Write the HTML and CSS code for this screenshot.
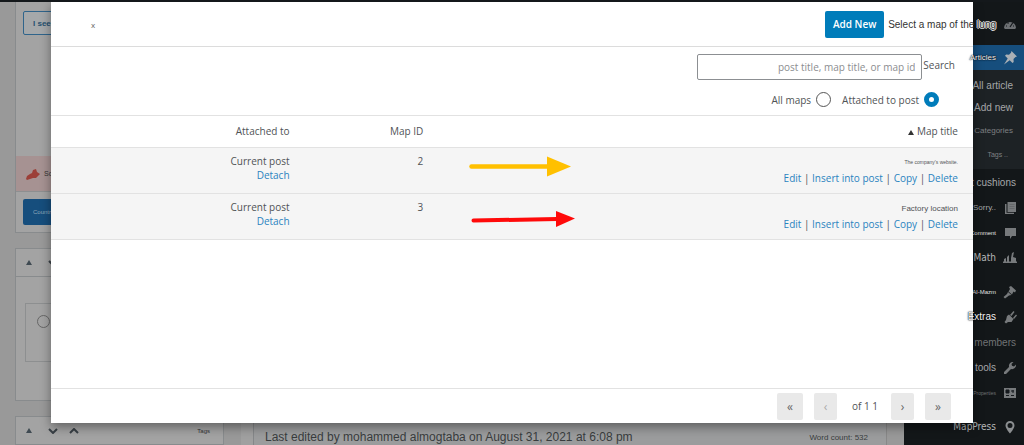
FILE: index.html
```html
<!DOCTYPE html>
<html lang="en">
<head>
<meta charset="utf-8">
<title>Select a map</title>
<link rel="stylesheet" href="styles.css">
</head>
<body>
<div class="page">
  <div class="workspace">
    <aside class="side">
      <section class="panel publish">
        <div class="publish-top"><button class="btn-outline" type="button">I see ...</button></div>
        <div class="notice">
          <svg width="16" height="12" viewBox="0 0 16 12"><path d="M1 11 2 8l3-2 2-1 1-3 3-1 1 3 3 2-2 2-2 2H8l-3 1-3 1z" fill="#9c3f38"/></svg>
          <span>So..</span>
        </div>
        <div class="publish-bottom"><button class="btn-solid" type="button">Country</button></div>
      </section>
      <section class="panel options">
        <div class="panel-head">
          <svg width="6" height="5" viewBox="0 0 6 5"><path d="M0 5 3 0l3 5z" fill="#3f4a52"/></svg>
          <svg width="10" height="6" viewBox="0 0 10 6"><path d="m1 1 4 4 4-4" class="chev"/></svg>
        </div>
        <div class="option-box"><span class="option-dot"></span></div>
      </section>
      <section class="panel tags">
        <div class="panel-head">
          <svg width="6" height="5" viewBox="0 0 6 5"><path d="M0 5 3 0l3 5z" fill="#3f4a52"/></svg>
          <svg width="10" height="6" viewBox="0 0 10 6"><path d="m1 1 4 4 4-4" class="chev"/></svg>
          <svg width="10" height="6" viewBox="0 0 10 6"><path d="m1 5 4-4 4 4" class="chev"/></svg>
          <span class="panel-title">Tags</span>
        </div>
      </section>
    </aside>
    <main class="editor">
      <div class="status">
        <span>Last edited by mohammed almogtaba on August 31, 2021 at 6:08 pm</span>
        <span class="words">Word count: 532</span>
      </div>
    </main>
  </div>

  <nav class="menu" aria-label="Admin">
    <div class="item first"><svg class="ico" viewBox="0 0 14 14"><path d="M1 11a6 6 0 1 1 12 0l-1 1H2z" fill="#6d7073"/><path d="M3 9h1M4.500 5.500l1 1M7 4v1M11 9h-1M7 10l3-4.500" stroke="#15191c" stroke-width="1.200" fill="none"/></svg></div>
    <a class="item current" href="#"><span class="over">Articles</span><svg class="ico" viewBox="0 0 14 14"><path d="m8.500 0 5.500 5.500-1.500.5-2 2 .2 3-1.200 1-2.800-2.800L1 13.500 4.700 7.500 2 4.800l1.200-1.300 2.800.3 2-2z" fill="#a9b0b6"/></svg></a>
    <div class="submenu">
      <a href="#">All article</a>
      <a href="#">Add new</a>
      <a class="s8" href="#">Categories</a>
      <a class="s7" href="#">Tags&nbsp;..</a>
    </div>
    <a class="item plain" href="#"><span>t cushions</span></a>
    <a class="item s8" href="#"><span>Sorry..</span><svg class="ico" viewBox="0 0 14 14"><path d="M4.500 1H13v10H4.500z" fill="#777a7c"/><path d="M3.500 3H2v10h9v-1.200H3.500z" fill="#777a7c"/><path d="M6.500 3.500h5M6.500 5.500h5M6.500 7.500h5" stroke="#66696b"/></svg></a>
    <a class="item s6 bright" href="#"><span>Comment</span><svg class="ico" viewBox="0 0 14 14"><path d="M2 2h11v8H9l-2 3v-3H2z" fill="#777a7c"/></svg></a>
    <a class="item s10" href="#"><span>Math</span><svg class="ico" viewBox="0 0 14 14"><path d="M1 11V8l2-1v4zm3 0V6l2-2v7zm4 0V7l1-5 2-1-1 5 3 1v4zM0 10.500h14V12H0z" fill="#777a7c"/></svg></a>
    <a class="item s6 bright gap" href="#"><span>Al-Mazm</span><svg class="ico" viewBox="0 0 14 14"><path d="m6 2 2-1 5 4.500-1 2-1.500-1L9 9.500 5.500 6.500 7 4zM5 7l3.500 3-2.500.5L2 13.500.5 12 4 9z" fill="#777a7c"/></svg></a>
    <a class="item" href="#"><span class="over">Extras</span><svg class="ico" viewBox="0 0 14 14"><path d="m4 6 2-1.500L10.500 9l-2 3H5l-2 1.500L1.500 12 3 10zM7 5l3.500-4 1 1L8.500 6zM10 8l3-3.500 1 1L11 9z" fill="#777a7c"/></svg></a>
    <a class="item plain dim" href="#"><span>n members</span></a>
    <a class="item" href="#"><span>tools</span><svg class="ico" viewBox="0 0 14 14"><path d="M13 3.500 11 5.500 9 4.800 8.500 3l2-2A4 4 0 0 0 6 6L1 11v2h2l5-5a4 4 0 0 0 5-4.500z" fill="#777a7c"/></svg></a>
    <a class="item s5 dim" href="#"><span>Properties</span><svg class="ico" viewBox="0 0 14 14"><path d="M1 2h12v10H1z" fill="#777a7c"/><path d="M3 4h3v3H3zM8 5h3M10 4v3M3 9.500h3M8 9.500h3" fill="#15191c" stroke="#15191c"/></svg></a>
    <a class="item s10 gap" href="#"><span>MapPress</span><svg class="ico" viewBox="0 0 14 14"><path fill-rule="evenodd" d="M7 1a4.500 4.500 0 0 1 4.500 4.500C11.500 8.500 7 13.500 7 13.500S2.500 8.500 2.500 5.500A4.500 4.500 0 0 1 7 1zm0 2a2.500 2.500 0 1 0 0 5 2.500 2.500 0 0 0 0-5z" fill="#8b8e90"/></svg></a>
  </nav>

  <div class="modal" role="dialog" aria-labelledby="dialog-title">
    <header class="modal-head">
      <button class="close" type="button" aria-label="Close">x</button>
      <button class="add" type="button">Add New</button>
      <h1 id="dialog-title" class="title">Select a map of the <span class="halo">lung</span></h1>
    </header>
    <form class="filters">
      <div class="search">
        <input id="q" type="text" placeholder="post title, map title, or map id">
        <label for="q">Search</label>
      </div>
      <div class="radios">
        <label for="all">All maps</label><input id="all" type="radio" name="scope">
        <label class="second" for="attached">Attached to post</label><input id="attached" type="radio" name="scope" checked>
      </div>
    </form>
    <div class="list">
      <table>
        <thead>
          <tr><th class="c-att">Attached to</th><th class="c-id">Map ID</th><th><svg width="6" height="5" viewBox="0 0 6 5"><path d="M0 5 3 0l3 5z" fill="#333"/></svg> Map title</th></tr>
        </thead>
        <tbody>
          <tr>
            <td>Current post<br><a href="#">Detach</a></td>
            <td>2</td>
            <td class="c-title">
              <svg class="arrow" width="104" height="22" viewBox="0 0 104 22"><path d="M2.500 11.500H80" stroke="#ffc000" stroke-width="4.500" stroke-linecap="round"/><path d="M78 1.500v20l24-10z" fill="#ffc000"/></svg>
              <div class="name tiny">The company's website.</div>
              <div class="actions"><a href="#">Edit</a> | <a href="#">Insert into post</a> | <a href="#">Copy</a> | <a href="#">Delete</a></div>
            </td>
          </tr>
          <tr>
            <td>Current post<br><a href="#">Detach</a></td>
            <td>3</td>
            <td class="c-title">
              <svg class="arrow" width="108" height="28" viewBox="0 0 108 28"><path d="M4.500 19.500 88 18" stroke="#ff0a0a" stroke-width="4" stroke-linecap="round"/><path d="M87 10v16l19-8.500z" fill="#ff0a0a"/></svg>
              <div class="name">Factory location</div>
              <div class="actions"><a href="#">Edit</a> | <a href="#">Insert into post</a> | <a href="#">Copy</a> | <a href="#">Delete</a></div>
            </td>
          </tr>
        </tbody>
      </table>
    </div>
    <footer class="pager">
      <button type="button" class="wide">«</button>
      <button type="button" disabled>‹</button>
      <span class="count">of 1 1</span>
      <button type="button">›</button>
      <button type="button" class="wide">»</button>
    </footer>
  </div>
</div>
</body>
</html>
```
FILE: styles.css
```css
* { box-sizing: border-box; }
body {
  margin: 0;
  font-family: "Open Sans", "Noto Sans", sans-serif;
  font-size: 10px;
  color: #505356;
  overflow: hidden;
}
a { color: #2a83bf; text-decoration: none; }
button { font-family: inherit; padding: 0; cursor: pointer; }
svg { display: block; }
.page {
  position: relative;
  display: flex;
  height: 100vh;
  border-top: 2px solid #14181b;
  background: #999;
  overflow: hidden;
}

/* Editor behind the dialog */
.workspace { flex: 1; display: flex; gap: 17px; padding: 0 17px 0 15px; font-family: "Liberation Sans", sans-serif; }
.side { width: 209px; display: flex; flex-direction: column; gap: 15px; }
.panel { flex-shrink: 0; background: #a3a3a3; border: 1px solid #888b8d; }
.publish { border-top: 0; }
.publish-top { height: 154px; padding: 9px 7px; }
.btn-outline, .btn-solid { display: block; width: 60px; text-align: left; border-radius: 2px; }
.btn-outline { height: 24px; padding-left: 9px; border: 1px solid #2f648b; background: #a5a8aa; color: #26506f; font-size: 8px; font-weight: bold; }
.notice { display: flex; align-items: center; gap: 3px; width: 60px; height: 35px; padding-left: 9px; background: #a69292; font-size: 7px; color: #333; }
.publish-bottom { border-top: 1px solid #8d8f90; padding: 7px; }
.btn-solid { height: 26px; padding-left: 10px; border: 0; background: #164e7d; color: #8da5b8; font-size: 6px; }
.options { height: 153px; }
.panel-head { display: flex; align-items: center; gap: 16px; height: 28px; padding: 0 13px 0 10px; border-bottom: 1px solid #888b8d; }
.tags .panel-head { gap: 11px; }
.tags .panel-head svg:first-child { margin-right: 5px; }
.chev { fill: none; stroke: #394046; stroke-width: 2; }
.panel-title { margin-left: auto; font-size: 6px; color: #333; }
.option-box { height: 59px; margin: 26px 9px; padding: 11px; border: 1px solid #8d8f90; }
.option-dot { display: block; width: 13px; height: 13px; border: 1px solid #666; border-radius: 50%; }
.editor { flex: 1; display: flex; flex-direction: column; justify-content: flex-end; background: #a0a0a0; padding-left: 12px; border-right: 1px solid #888; }
.status { display: flex; align-items: center; height: 22px; padding: 6px 18px 0 11px; border-left: 1px solid #858789; background: #9b9c9d; font-size: 12px; color: #393c3e; }
.words { margin-left: auto; font-size: 8px; }

/* Admin menu */
.menu { width: 120px; background: #131719; font-family: "Liberation Sans", sans-serif; font-size: 10px; }
.menu a { color: #a5a7a9; }
.item { display: flex; align-items: center; justify-content: flex-end; gap: 7px; height: 25px; padding-right: 7px; white-space: nowrap; }
.item.first { height: 43px; }
.item.plain { padding-right: 8px; height: 26px; }
.item.current { background: #164e7d; }
.menu .current { color: #eef2f5; font-size: 8px; }
.submenu { display: flex; flex-direction: column; align-items: flex-end; padding: 5px 11px 2px 0; background: #1d2225; }
.submenu a { line-height: 22px; }
.menu .submenu .s8, .menu .submenu .s7 { line-height: 24px; color: #7d8083; }
.submenu .s7 { margin-right: 5px; }
.item .ico { width: 14px; height: 14px; flex-shrink: 0; }
.menu .gap { margin-top: 9px; }
.over { position: relative; z-index: 3; color: #f2f2f2; text-shadow: 0 0 1px #000, 0 0 2px #000; }
.menu .s5 { font-size: 5px; }
.menu .s6 { font-size: 6px; }
.menu .s7 { font-size: 7px; }
.menu .s8 { font-size: 8px; }
.menu .s10 { font-family: "DejaVu Sans Condensed", "DejaVu Sans", sans-serif; color: #b5b7b8; }
.menu .bright { color: #e0e0e0; }
.menu .dim { color: #707375; }

/* Dialog */
.modal {
  position: absolute;
  z-index: 2;
  inset: 0 51px 22px;
  display: flex;
  flex-direction: column;
  background: #fff;
  box-shadow: 0 4px 10px rgba(0, 0, 0, .4);
}
.modal-head { display: flex; align-items: center; height: 45px; padding-left: 40px; border-bottom: 1px solid #dcdcdc; }
.close { margin-right: auto; border: 0; background: none; font-size: 8px; color: #666; }
.add { width: 59px; height: 27px; margin-right: 4px; border: 0; border-radius: 2px; background: #007cba; color: #fff; font-size: 10px; font-weight: 600; }
.title { margin: 0 -23px 0 0; font: 10px "Liberation Sans", sans-serif; color: #333; white-space: nowrap; }
.halo { text-shadow: 1px 0 #e8e8e8, -1px 0 #e8e8e8, 0 1px #e8e8e8, 0 -1px #e8e8e8; }
.filters { display: flex; flex-direction: column; height: 69px; padding: 7px 18px 0; border-bottom: 1px solid #e2e2e2; }
.search { display: flex; justify-content: flex-end; gap: 1px; }
.search label { line-height: 22px; }
.search input { width: 225px; height: 26px; padding: 0 6px; border: 1px solid #8c8f92; border-radius: 2px; font: inherit; text-align: right; color: #444; outline: 0; }
.search input::placeholder { color: #8b8d90; opacity: 1; }
.radios { display: flex; align-items: center; justify-content: flex-end; gap: 5px; padding: 12px 16px 0 0; }
.radios .second { margin-left: 6px; }
.radios input { appearance: none; width: 15px; height: 15px; margin: 0; border: 1px solid #555; border-radius: 50%; background: #fff; }
.radios input:checked { border: 5px solid #007cba; }
.list { flex: 1; }
table { width: 100%; border-collapse: collapse; table-layout: fixed; }
th, td { padding: 0 15px 0 0; text-align: right; vertical-align: top; font-weight: normal; border-bottom: 1px solid #e2e2e2; }
th { height: 31px; vertical-align: middle; }
th svg { display: inline-block; }
.c-att { width: 27.5%; }
.c-id { width: 14.5%; }
td { height: 46px; padding-top: 6px; line-height: 14px; background: #f5f5f5; }
.c-title { position: relative; }
.arrow { position: absolute; left: 31px; top: 7px; }
.name { font: 8px "Liberation Sans", sans-serif; line-height: 17px; }
.name.tiny { font-size: 5px; }
.actions { line-height: 15px; }
.pager { display: flex; align-items: center; justify-content: flex-end; gap: 11px; height: 35px; padding-right: 22px; border-top: 1px solid #e2e2e2; }
.pager button { width: 23px; height: 27px; border: 0; border-radius: 2px; background: #e9e9e9; color: #666; font-size: 12px; }
.pager .wide { width: 26px; }
.pager button:disabled { color: #aaa; }
.count { padding: 0 2px 0 4px; }
```
